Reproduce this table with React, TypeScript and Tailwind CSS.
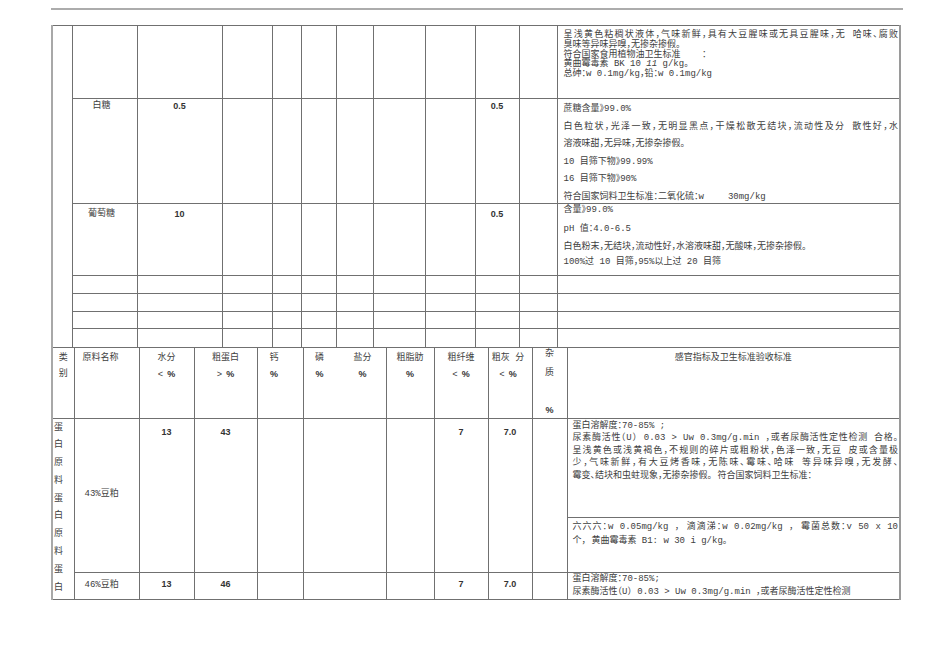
import React from "react";

// 扫描件风格的原料验收标准表
const txt =
  "font-['Liberation_Mono','Noto_Sans_CJK_SC',monospace] text-[9px] text-[#404040] [font-feature-settings:'halt']";
const num = "font-['Liberation_Sans','Noto_Sans_CJK_SC',sans-serif] font-bold text-[9px] text-[#333]";
const bd = "border border-[#707070]";
const td = `${bd} align-top`;
const just = "whitespace-nowrap text-justify [text-align-last:justify]";
const lastCol = "border-r-2 border-r-[#9a9a9a]";

function Empty({ n }: { n: number }) {
  return (
    <>
      {Array.from({ length: n }).map((_, i) => (
        <td key={i} className={td} />
      ))}
    </>
  );
}

function Pct({ sign }: { sign?: string }) {
  return (
    <div>
      {sign ? <span className="mr-[4px]">{sign}</span> : null}
      <span className={num}>%</span>
    </div>
  );
}

function UpperTable() {
  return (
    <table className={`table-fixed border-collapse w-[848px] ${txt}`}>
      <colgroup>
        <col className="w-[20px]" />
        <col className="w-[65px]" />
        <col className="w-[85px]" />
        <col className="w-[50px]" />
        <col className="w-[29px]" />
        <col className="w-[35px]" />
        <col className="w-[37px]" />
        <col className="w-[52px]" />
        <col className="w-[50px]" />
        <col className="w-[44px]" />
        <col className="w-[38px]" />
        <col className="w-[343px]" />
      </colgroup>
      <tbody>
        <tr className="h-[73px]">
          <td rowSpan={7} className={`${td} border-l-2 border-l-[#a8a8a8]`} />
          <Empty n={10} />
          <td className={`${td} ${lastCol} pl-[6px] pr-[1px] pt-[5px] leading-[9.8px]`}>
            <div className={just}>呈浅黄色粘稠状液体，气味新鲜，具有大豆腥味或无具豆腥味，无 哈味、腐败</div>
            <div>臭味等异味异嗅，无掺杂掺假。</div>
            <div className="whitespace-pre">符合国家食用植物油卫生标准    ：</div>
            <div>
              黄曲霉毒素 BK 10 <i>11</i> g/kg。
            </div>
            <div>总砷：w 0.1mg/kg，铅：w 0.1mg/kg</div>
          </td>
        </tr>
        <tr className="h-[105px]">
          <td className={`${td} text-center pr-[6px] pt-[1px] leading-[12px]`}>白糖</td>
          <td className={`${td} text-center pt-[1px] leading-[12px]`}>
            <span className={num}>0.5</span>
          </td>
          <Empty n={6} />
          <td className={`${td} text-center pt-[1px] leading-[12px]`}>
            <span className={num}>0.5</span>
          </td>
          <td className={td} />
          <td className={`${td} ${lastCol} pl-[6px] pr-[1px] pt-[4px] leading-[12px]`}>
            <div className="flex flex-col gap-[5.5px]">
              <div>蔗糖含量》99.0%</div>
              <div className={just}>白色粒状，光泽一致，无明显黑点，干燥松散无结块，流动性及分 散性好，水</div>
              <div>溶液味甜，无异味，无掺杂掺假。</div>
              <div>10 目筛下物》99.99%</div>
              <div>16 目筛下物》90%</div>
              <div>
                符合国家饲料卫生标准：二氧化硫：w<span className="inline-block w-[24px]" />30mg/kg
              </div>
            </div>
          </td>
        </tr>
        <tr className="h-[72px]">
          <td className={`${td} text-center pr-[6px] pt-[4px] leading-[12px]`}>葡萄糖</td>
          <td className={`${td} text-center pt-[4px] leading-[12px]`}>
            <span className={num}>10</span>
          </td>
          <Empty n={6} />
          <td className={`${td} text-center pt-[4px] leading-[12px]`}>
            <span className={num}>0.5</span>
          </td>
          <td className={td} />
          <td className={`${td} ${lastCol} pl-[6px] pt-0 leading-[12px]`}>
            <div>含量》99.0%</div>
            <div className="mt-[7px]">pH 值：4.0-6.5</div>
            <div className="mt-[6px]">白色粉末，无结块，流动性好，水溶液味甜，无酸味，无掺杂掺假。</div>
            <div className="mt-[3px]">100%过 10 目筛，95%以上过 20 目筛</div>
          </td>
        </tr>
        {["h-[18px]", "h-[18px]", "h-[17px]", "h-[19px]"].map((h, i) => (
          <tr key={i} className={h}>
            <Empty n={10} />
            <td className={`${td} ${lastCol}`} />
          </tr>
        ))}
      </tbody>
    </table>
  );
}

function LowerTable() {
  const hd = `${td} border-t-0 text-center leading-[16px] pt-[2px]`;
  const mid = `${bd} align-middle text-center`;
  const topNum = `${td} text-center pt-[7px] leading-[12px]`;
  return (
    <table className={`table-fixed border-collapse w-[848px] ${txt}`}>
      <colgroup>
        <col className="w-[22px]" />
        <col className="w-[65px]" />
        <col className="w-[55px]" />
        <col className="w-[63px]" />
        <col className="w-[46px]" />
        <col className="w-[83px]" />
        <col className="w-[48px]" />
        <col className="w-[54px]" />
        <col className="w-[44px]" />
        <col className="w-[35px]" />
        <col className="w-[333px]" />
      </colgroup>
      <tbody>
        <tr className="h-[70px]">
          <td className={`${hd} border-l-2 border-l-[#a8a8a8]`}>
            <div>类</div>
            <div>别</div>
          </td>
          <td className={`${td} border-t-0 pl-[8px] leading-[16px] pt-[2px]`}>原料名称</td>
          <td className={hd}>
            <div>水分</div>
            <Pct sign="<" />
          </td>
          <td className={hd}>
            <div>粗蛋白</div>
            <Pct sign=">" />
          </td>
          <td className={`${hd} pr-[12px]`}>
            <div>钙</div>
            <Pct />
          </td>
          <td className={`${td} border-t-0 leading-[16px] pt-[2px]`}>
            <div className="flex">
              <div className="w-[32px] text-center">
                <div>磷</div>
                <Pct />
              </div>
              <div className="flex-1 text-center pl-[4px]">
                <div>盐分</div>
                <Pct />
              </div>
            </div>
          </td>
          <td className={hd}>
            <div>粗脂肪</div>
            <Pct />
          </td>
          <td className={hd}>
            <div>粗纤维</div>
            <Pct sign="<" />
          </td>
          <td className={`${hd} pr-[4px]`}>
            <div className="whitespace-pre">粗灰 分</div>
            <Pct sign="<" />
          </td>
          <td className={`${td} border-t-0 text-center leading-[12px]`}>
            <div>杂</div>
            <div className="mt-[7px]">质</div>
            <div className="mt-[25px]">
              <span className={num}>%</span>
            </div>
          </td>
          <td className={`${hd} ${lastCol}`}>感官指标及卫生标准验收标准</td>
        </tr>
        <tr className="h-[99px]">
          <td rowSpan={3} className={`${td} border-l-2 border-l-[#a8a8a8] pl-[1px] pt-[1px] leading-[17.8px]`}>
            {"蛋白原料蛋白原料蛋白".split("").map((c, i) => (
              <div key={i}>{c}</div>
            ))}
          </td>
          <td rowSpan={2} className={`${bd} align-middle pl-[10px]`}>
            43%豆粕
          </td>
          <td rowSpan={2} className={topNum}>
            <span className={num}>13</span>
          </td>
          <td rowSpan={2} className={topNum}>
            <span className={num}>43</span>
          </td>
          <td rowSpan={2} className={td} />
          <td rowSpan={2} className={td} />
          <td rowSpan={2} className={td} />
          <td rowSpan={2} className={topNum}>
            <span className={num}>7</span>
          </td>
          <td rowSpan={2} className={topNum}>
            <span className={num}>7.0</span>
          </td>
          <td rowSpan={2} className={td} />
          <td className={`${td} ${lastCol} pl-[5px] pr-[1px] pt-[1px] leading-[12.5px]`}>
            <div>蛋白溶解度：70-85% ;</div>
            <div className={just}>尿素酶活性（U） 0.03 &gt; Uw 0.3mg/g.min ，或者尿酶活性定性检测 合格。</div>
            <div className={just}>呈浅黄色或浅黄褐色，不规则的碎片或粗粉状，色泽一致，无豆 皮或含量极</div>
            <div className={just}>少，气味新鲜，有大豆烤香味，无陈味、霉味、哈味 等异味异嗅，无发酵、</div>
            <div>霉变、结块和虫蛀现象，无掺杂掺假。 符合国家饲料卫生标准：</div>
          </td>
        </tr>
        <tr className="h-[55px]">
          <td className={`${td} ${lastCol} pl-[5px] pr-[1px] pt-[2px] leading-[14px]`}>
            <div className={just}>六六六：w 0.05mg/kg ， 滴滴涕：w 0.02mg/kg ， 霉菌总数：v 50 x 10</div>
            <div>个， 黄曲霉毒素 B1: w 30 i g/kg。</div>
          </td>
        </tr>
        <tr className="h-[27px]">
          <td className={`${bd} align-middle pl-[10px]`}>46%豆粕</td>
          <td className={mid}>
            <span className={num}>13</span>
          </td>
          <td className={mid}>
            <span className={num}>46</span>
          </td>
          <Empty n={3} />
          <td className={mid}>
            <span className={num}>7</span>
          </td>
          <td className={mid}>
            <span className={num}>7.0</span>
          </td>
          <td className={td} />
          <td className={`${td} ${lastCol} pl-[5px] leading-[13px]`}>
            <div>蛋白溶解度：70-85%;</div>
            <div>尿素酶活性（U） 0.03 &gt; Uw 0.3mg/g.min ，或者尿酶活性定性检测</div>
          </td>
        </tr>
      </tbody>
    </table>
  );
}

export default function App() {
  return (
    <div className="w-[950px] h-[672px] bg-white pt-[8px] pl-[51px] overflow-hidden">
      <div className="w-[852px] h-[2px] bg-[#acacac]" />
      <div className="mt-[15px]">
        <UpperTable />
        <LowerTable />
      </div>
    </div>
  );
}
